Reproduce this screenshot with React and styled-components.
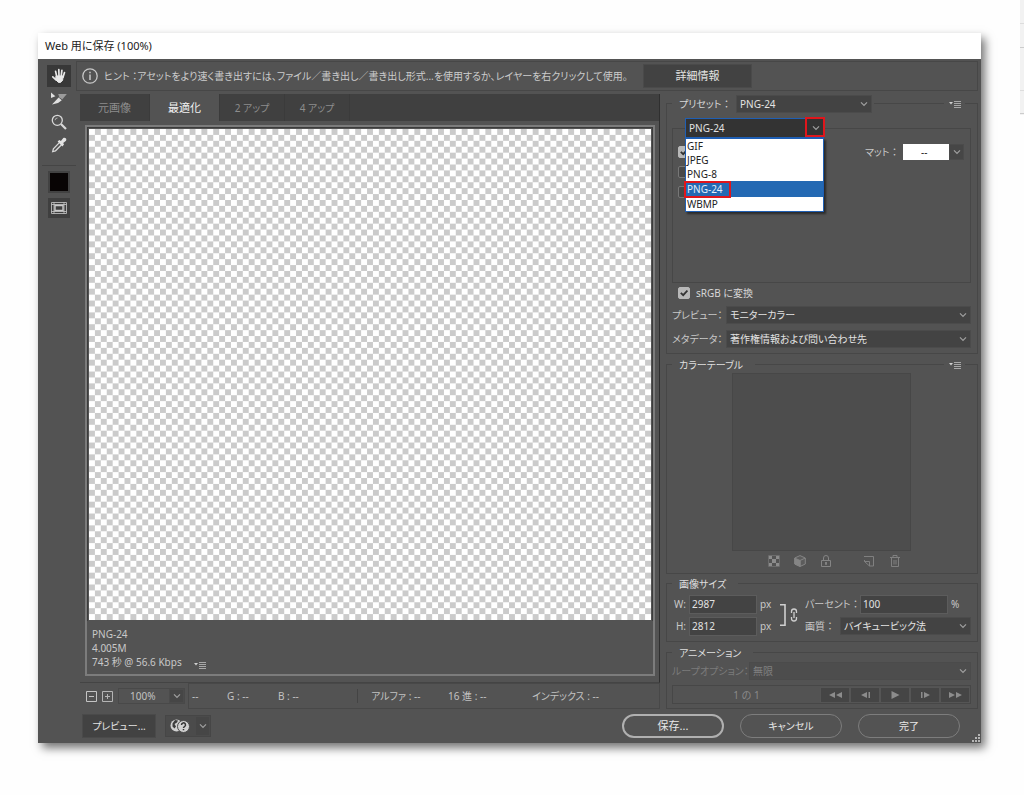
import React, { useId } from 'react';
import styled, { createGlobalStyle } from 'styled-components';

const GlobalStyle = createGlobalStyle`
  * {
    box-sizing: border-box;
  }

  body {
    margin: 0;
    background: #fefefe;
    font-family: 'Noto Sans', 'Noto Sans CJK JP', sans-serif;
    font-size: 10px;
    line-height: 14px;
    color: #d6d6d6;
    font-feature-settings: 'palt';
  }

  button, input, select {
    margin: 0;
    font: inherit;
    color: inherit;
    font-feature-settings: inherit;
  }
`;

const Page = styled.div`
  display: flex;
  position: relative;
  min-height: 100vh;
  padding: 33px 43px 52px 38px;
`;

const PageEdge = styled.div`
  position: absolute;
  top: 0;
  right: 0;
  width: 4px;
  height: 115px;
  background: linear-gradient(#ddd, #ddd) 0 23px / 100% 1px no-repeat,
    linear-gradient(#ccc, #ccc) 0 47px / 100% 1px no-repeat,
    linear-gradient(#ddd, #ddd) 0 90px / 100% 1px no-repeat,
    linear-gradient(#ccc, #ccc) 0 113px / 100% 1px no-repeat,
    #f2f2f2;
`;

const Dialog = styled.div`
  display: flex;
  position: relative;
  flex: 1;
  flex-direction: column;
  min-width: 0;
  background: #535353;
  box-shadow: 4px 5px 9px rgba(0, 0, 0, 0.55);
`;

const TitleBar = styled.h1`
  height: 26px;
  margin: 0;
  padding: 0 7px;
  background: #fff;
  color: #222;
  font-size: 11px;
  font-weight: 400;
  line-height: 25px;
`;

const Body = styled.div`
  display: flex;
  flex: 1;
`;

const Tools = styled.div`
  display: flex;
  flex-direction: column;
  align-items: center;
  width: 38px;
  padding: 6px 0 0 4px;
`;

const ToolButton = styled.button`
  display: flex;
  align-items: center;
  justify-content: center;
  width: 24px;
  height: 22px;
  margin-bottom: 1px;
  padding: 0;
  border: 0;
  background: ${({ $active }) => ($active ? '#383838' : 'transparent')};
`;

const ToolDivider = styled.hr`
  width: 100%;
  margin: 8px 0 5px;
  border: 0;
  border-top: 1px solid #454545;
`;

const Swatch = styled.button`
  width: 22px;
  height: 22px;
  margin-bottom: 5px;
  border: 2px solid #424242;
  background: #080404;
`;

const SliceButton = styled(ToolButton)`
  width: 22px;
  height: 20px;
  background: #3f3f3f;
`;

const Main = styled.div`
  display: flex;
  flex: 1;
  flex-direction: column;
  min-width: 0;
  padding: 2px 3px 0 0;
`;

const HintBar = styled.div`
  display: flex;
  align-items: center;
  height: 30px;
  padding: 0 5px;
  border: 1px solid #474747;

  svg {
    flex: none;
  }
`;

const HintText = styled.span`
  width: 539px;
  margin-left: 6px;
  color: #ccc;
  white-space: nowrap;
`;

const FlatButton = styled.button`
  width: ${({ $width }) => $width}px;
  height: 24px;
  padding: 0;
  border: 1px solid #4a4a4a;
  background: #424242;
  color: #e2e2e2;
  font-size: ${({ $size }) => $size || 11}px;
`;

const Columns = styled.div`
  display: flex;
  gap: 6px;
  height: 618px;
`;

const Left = styled.div`
  display: flex;
  flex: 1;
  flex-direction: column;
  min-width: 0;
  padding: 3px 0 0 4px;
`;

const Viewer = styled.div`
  display: flex;
  flex: 1;
  flex-direction: column;
  border-right: 1px solid #2f2f2f;
  border-bottom: 1px solid #444;
`;

const Tabs = styled.div`
  display: flex;
  height: 27px;
  background: #404040;
`;

const Tab = styled.button`
  width: ${({ $wide }) => ($wide ? 70 : 65)}px;
  padding: 0;
  border: 0;
  border-right: 1px solid #3b3b3b;
  background: ${({ $active }) => ($active ? '#535353' : 'transparent')};
  color: ${({ $active }) => ($active ? '#f2f2f2' : '#8d8d8d')};
  font-size: ${({ $wide }) => ($wide ? 11 : 10)}px;
`;

const Frame = styled.div`
  display: flex;
  flex: 1;
  flex-direction: column;
  margin: 4px 4px 6px 5px;
  border: 2px solid #7c7c7c;
`;

const Canvas = styled.div`
  display: flex;
  height: 494px;
  padding: 1px;
  border: 1px solid #3c3c3c;
  border-width: 1px 1px 0;

  svg {
    flex: 1;
    min-width: 0;
    height: 100%;
  }
`;

const FileInfo = styled.div`
  display: flex;
  align-items: flex-end;
  gap: 11px;
  padding: 6px 5px 5px;
  color: #c8c8c8;
`;

const StatusBar = styled.div`
  display: flex;
  align-items: center;
  height: 26px;
  color: #c2c2c2;
`;

const ZoomControls = styled.div`
  display: flex;
  align-items: center;
  gap: 5px;
  width: 108px;
  height: 26px;
  padding-left: 6px;
`;

const StepButton = styled.button`
  width: 11px;
  height: 11px;
  padding: 0;
  border: 0;
  background: transparent;
  line-height: 0;
`;

const ZoomSelect = styled.div`
  display: flex;
  width: 67px;
  height: 16px;
  border: 1px solid #494949;

  select {
    flex: 1;
    min-width: 0;
    padding: 0 0 0 11px;
    border: 0;
    background: transparent;
    appearance: none;
  }
`;

const Readouts = styled.div`
  display: grid;
  flex: 1;
  grid-template-columns: 35px 51px 79px 91px 84px 1fr;
  align-items: center;
  height: 26px;
  padding-left: 3px;
  border: 1px solid #484848;
  white-space: nowrap;
`;

const AlphaReadout = styled.span`
  padding-left: 13px;
  border-left: 1px solid #444;
`;

const SelectBox = styled.div`
  display: flex;
  position: relative;
  flex: ${({ $width }) => ($width ? 'none' : 1)};
  width: ${({ $width }) => ($width ? `${$width}px` : 'auto')};
  height: ${({ $height }) => $height || 18}px;
  border: 1px solid ${({ $open }) => ($open ? '#1f5fb4' : '#4b4b4b')};
  background: ${({ $open, $faded }) => ($open ? '#333' : $faded ? '#4d4d4d' : '#434343')};

  select {
    flex: 1;
    min-width: 0;
    padding: 0 16px 0 3px;
    border: 0;
    background: transparent;
    appearance: none;
    color: ${({ $faded }) => ($faded ? '#808080' : '#e2e2e2')};
    opacity: 1;
  }

  svg {
    position: absolute;
    top: calc(50% - 3px);
    right: 3px;
    pointer-events: none;
  }
`;

const Right = styled.div`
  display: flex;
  flex-direction: column;
  width: 312px;
`;

const Group = styled.section`
  height: ${({ $height }) => $height}px;
  margin-top: ${({ $gap }) => $gap || 10}px;
  padding: 0 6px 0 5px;
  border: 1px solid #474747;
`;

const GroupHead = styled.div`
  display: flex;
  align-items: center;
  justify-content: space-between;
  height: 17px;
  margin-top: -9px;
  padding: 0 6px 0 0;
`;

const GroupTitle = styled.h2`
  display: flex;
  align-items: center;
  margin: 0;
  padding: 0 12px 0 7px;
  background: #535353;
  color: #dedede;
  font-size: 10px;
  font-weight: 400;
`;

const PresetLabel = styled.label`
  display: flex;
  align-items: center;
  padding: 0 2px 0 7px;
  background: #535353;

  span {
    width: 57px;
  }
`;

const MenuButton = styled.button`
  display: flex;
  padding: 2px 4px;
  border: 0;
  background: #535353;
`;

const Options = styled.div`
  height: 155px;
  margin-top: 16px;
  padding: 0 6px 0 5px;
  border: 1px solid #474747;
`;

const FormatPicker = styled.div`
  position: relative;
  z-index: 2;
  width: 140px;
  height: 20px;
  margin: -11px 0 4px 7px;
`;

const FormatList = styled.ul`
  position: absolute;
  top: 20px;
  left: 0;
  width: 139px;
  margin: 0;
  padding: 0;
  border: 1px solid #1f5fb4;
  background: #fff;
  box-shadow: 2px 2px 2px rgba(0, 0, 0, 0.5);
  list-style: none;
`;

const FormatItem = styled.li`
  padding: ${({ $selected }) => ($selected ? '1px' : '0 1px')};
  background: ${({ $selected }) => ($selected ? '#2469b3' : 'transparent')};
  color: ${({ $selected }) => ($selected ? '#e6eefa' : '#222')};
`;

// red frames that point out where to click
const Marker = styled.span`
  position: absolute;
  z-index: 3;
  top: ${({ $top }) => $top}px;
  left: ${({ $left }) => $left}px;
  width: ${({ $width }) => $width}px;
  height: ${({ $height }) => $height}px;
  border: 2px solid #e0161c;
  pointer-events: none;
`;

const OptionRow = styled.div`
  display: flex;
  align-items: center;
  justify-content: space-between;
  height: 20px;
`;

const Check = styled.input`
  width: 12px;
  height: 12px;
  border: 1px solid ${({ defaultChecked }) => (defaultChecked ? '#b8b8b8' : '#777')};
  border-radius: 2px;
  appearance: none;
  background: ${({ defaultChecked }) => (defaultChecked ? '#b8b8b8' : '#484848')};
`;

const CheckWrap = styled.span`
  display: flex;
  position: relative;

  svg {
    position: absolute;
    top: 2px;
    left: 2px;
    pointer-events: none;
  }
`;

const Matte = styled.div`
  display: flex;
  align-items: center;
  color: #c8c8c8;

  label {
    width: 38px;
    white-space: nowrap;
  }

  select {
    width: 46px;
    height: 16px;
    padding: 0 18px;
    border: 0;
    border-radius: 0;
    appearance: none;
    background: #fff;
    color: #222;
  }
`;

const ArrowBox = styled.span`
  display: flex;
  align-items: center;
  justify-content: center;
  width: 15px;
  height: ${({ $height }) => $height || 16}px;
  border: 1px solid #4b4b4b;
  background: #464646;
`;

const SrgbLabel = styled.label`
  display: flex;
  align-items: center;
  gap: 6px;
  height: 20px;
  padding-left: 6px;
`;

const FieldRow = styled.div`
  display: flex;
  align-items: center;
  height: ${({ $height }) => $height || 24}px;
  color: ${({ $faded }) => ($faded ? '#7b7b7b' : '#c8c8c8')};
`;

const FieldLabel = styled.label`
  flex: none;
  width: ${({ $width }) => $width}px;
  text-align: ${({ $end }) => ($end ? 'right' : 'left')};
  white-space: nowrap;
`;

const ColorTable = styled.div`
  width: 179px;
  height: 178px;
  margin: 0 auto 0 60px;
  border: 1px solid #474747;
  background: #4d4d4d;
`;

const TableTools = styled.div`
  display: flex;
  gap: 14px;
  padding: 4px 0 0 96px;

  button:nth-child(4) {
    margin-left: 17px;
  }
`;

const IconButton = styled.button`
  width: 12px;
  height: 12px;
  padding: 0;
  border: 0;
  background: transparent;
  line-height: 0;
`;

const SizeGrid = styled.div`
  display: flex;
  align-items: center;
  height: 46px;
`;

const SizeColumn = styled.div`
  display: flex;
  flex: ${({ $width }) => ($width ? 'none' : 1)};
  flex-direction: column;
  gap: 3px;
  width: ${({ $width }) => ($width ? `${$width}px` : 'auto')};
  min-width: 0;
`;

const SizeRow = styled.div`
  display: flex;
  align-items: center;
  gap: 3px;
  height: 19px;
  color: #c8c8c8;
`;

const NumberInput = styled.input`
  width: ${({ $width }) => $width}px;
  height: 19px;
  padding: 0 2px;
  border: 1px solid #5c5c5c;
  background: #434343;
  color: #e2e2e2;
`;

const LinkMark = styled.svg`
  margin: 0 6px 0 7px;
`;

const Player = styled.div`
  display: flex;
  align-items: center;
  height: 19px;
  margin-top: 4px;
  border: 1px solid #474747;
  color: #8a8a8a;
`;

const FrameCount = styled.span`
  flex: 1;
  text-align: center;
`;

const PlayerButton = styled.button`
  width: 30px;
  height: 16px;
  padding: 0;
  border: 1px solid #555;
  background: #454545;
  line-height: 0;
`;

const Footer = styled.footer`
  display: flex;
  align-items: center;
  gap: 16px;
  height: 33px;
  padding: 0 18px 0 6px;
`;

const BrowserPicker = styled.button`
  display: flex;
  align-items: center;
  justify-content: flex-end;
  gap: 5px;
  width: 46px;
  height: 22px;
  margin: 0 auto 0 -7px;
  padding: 0;
  border: 1px solid #464646;
  background: #4b4b4b;
`;

const PillButton = styled.button`
  width: 102px;
  height: 24px;
  padding: 0;
  border: ${({ $primary }) => ($primary ? '2px solid #b0b0b0' : '1px solid #7d7d7d')};
  border-radius: 12px;
  background: transparent;
  color: #e8e8e8;
  font-size: ${({ $size }) => $size || 11}px;
`;

const Grip = styled.svg`
  position: absolute;
  right: 0;
  bottom: 0;
`;

function Chevron() {
  return (
    <svg width="8" height="6" viewBox="0 0 8 6" fill="none" stroke="#a0a0a0" strokeWidth="1.2">
      <path d="M1 1.3 4 4.3 7 1.3" />
    </svg>
  );
}

function MenuIcon() {
  return (
    <svg width="13" height="8" viewBox="0 0 13 8">
      <path fill="#d0d0d0" d="M1 2h4L3 4.5z" />
      <path fill="#a8a8a8" d="M6 1h7v1H6zM6 3h7v1H6zM6 5h7v1H6zM6 7h7v1H6z" />
    </svg>
  );
}

function Checkerboard() {
  return (
    <svg viewBox="0 0 95 83" preserveAspectRatio="none" shapeRendering="crispEdges">
      <defs>
        <pattern id="checks" width="2" height="2" patternUnits="userSpaceOnUse">
          <path fill="#fff" d="M0 0h2v2H0z" />
          <path fill="#cbcbcb" d="M1 0h1v1H1zM0 1h1v1H0z" />
        </pattern>
      </defs>
      <rect width="95" height="83" fill="url(#checks)" />
    </svg>
  );
}

function Select({ options, id, disabled, label, ...box }) {
  return (
    <SelectBox {...box}>
      <select id={id} disabled={disabled} aria-label={label}>
        {options.map((option) => (
          <option key={option}>{option}</option>
        ))}
      </select>
      <Chevron />
    </SelectBox>
  );
}

function Checkbox({ checked, label }) {
  return (
    <CheckWrap>
      <Check type="checkbox" defaultChecked={checked} aria-label={label} />
      {checked && (
        <svg width="8" height="8" viewBox="0 0 8 8" fill="none" stroke="#333" strokeWidth="1.8">
          <path d="M.8 3.8 3.2 6.2 7.4 1.5" />
        </svg>
      )}
    </CheckWrap>
  );
}

function ToolBox() {
  return (
    <Tools>
      <ToolButton $active aria-label="手のひらツール">
        <svg width="16" height="16" viewBox="0 0 16 16" fill="none" stroke="#e8e8e8" strokeLinecap="round">
          <path strokeWidth="1.7" d="M5.8 9 4.6 3.4M8 8 7.8 1.6M10.2 8l.7-5.6M12 9.2l1.5-4.6M5 11.8 1.8 8.8" />
          <path fill="#e8e8e8" d="M5.4 8h6.8l-.6 4.2-2 2.2H7.4L4.8 11.8z" />
        </svg>
      </ToolButton>
      <ToolButton aria-label="スライス選択ツール">
        <svg width="18" height="16" viewBox="0 0 18 16">
          <path fill="#e0e0e0" d="M1 1.5 5.4 5.2 1 7zM2 13.4 8.6 6.6l3.2 2.6L8 12z" />
          <path fill="#9b9b9b" d="M8.2 3h8.6l-4.5 5.6-3-2.4z" />
        </svg>
      </ToolButton>
      <ToolButton aria-label="ズームツール">
        <svg width="16" height="16" viewBox="0 0 16 16" fill="none" stroke="#d8d8d8">
          <circle cx="6.3" cy="6.3" r="5" strokeWidth="1.3" />
          <path d="M4 6.2A2.5 2.5 0 0 1 6.5 4" strokeWidth=".7" />
          <path d="m10 10 5 5" strokeWidth="2.2" />
        </svg>
      </ToolButton>
      <ToolButton aria-label="スポイトツール">
        <svg width="16" height="16" viewBox="0 0 16 16">
          <path fill="none" stroke="#d8d8d8" strokeWidth="1.3" d="m8.4 5.6-6 6.2-.7 2.8 2.8-.8 6-6" />
          <path fill="#e4e4e4" d="m6.6 4.5 1.7-1.5 1.6.9L12.3 1c1.8-1 3.8.7 2.7 2.7L12.2 6l.8 1.6-1.6 1.8z" />
        </svg>
      </ToolButton>
      <ToolDivider />
      <Swatch aria-label="スポイトカラー" />
      <SliceButton aria-label="スライスの表示を切り替え">
        <svg width="16" height="12" viewBox="0 0 16 12" fill="none" stroke="#c9c9c9">
          <path d="M.5.5h15v11H.5zM3 .5v11M13 .5v11M.5 2.5h15M.5 9.5h15" strokeWidth=".8" />
          <path d="M4 3.5h8v5H4z" strokeWidth="1.4" />
        </svg>
      </SliceButton>
    </Tools>
  );
}

function PreviewPane() {
  return (
    <Viewer>
      <Tabs role="tablist">
        <Tab role="tab" $wide>元画像</Tab>
        <Tab role="tab" $wide $active aria-selected="true">最適化</Tab>
        <Tab role="tab">2 アップ</Tab>
        <Tab role="tab">4 アップ</Tab>
      </Tabs>
      <Frame>
        <Canvas>
          <Checkerboard />
        </Canvas>
        <FileInfo>
          <div>
            PNG-24
            <br />
            4.005M
            <br />
            743 秒 @ 56.6 Kbps
          </div>
          <MenuIcon />
        </FileInfo>
      </Frame>
    </Viewer>
  );
}

function Status() {
  return (
    <StatusBar>
      <ZoomControls>
        <StepButton aria-label="ズームアウト">
          <svg width="11" height="11" viewBox="0 0 11 11" fill="none" stroke="#c4c4c4">
            <path d="M.5.5h10v10H.5zM3 5.5h5" />
          </svg>
        </StepButton>
        <StepButton aria-label="ズームイン">
          <svg width="11" height="11" viewBox="0 0 11 11" fill="none" stroke="#b4b4b4">
            <path d="M.5.5h10v10H.5zM3 5.5h5M5.5 3v5" />
          </svg>
        </StepButton>
        <ZoomSelect>
          <select aria-label="ズームレベル">
            <option>100%</option>
          </select>
          <ArrowBox $height={14}><Chevron /></ArrowBox>
        </ZoomSelect>
      </ZoomControls>
      <Readouts>
        <span>--</span>
        <span>G : --</span>
        <span>B : --</span>
        <AlphaReadout>アルファ : --</AlphaReadout>
        <span>16 進 : --</span>
        <span>インデックス : --</span>
      </Readouts>
    </StatusBar>
  );
}

const FORMATS = ['GIF', 'JPEG', 'PNG-8', 'PNG-24', 'WBMP'];

function PresetGroup() {
  const id = useId();
  return (
    <Group $height={251} $gap={12}>
      <GroupHead>
        <PresetLabel>
          <span>プリセット ：</span>
          <Select $width={136} options={['PNG-24']} />
        </PresetLabel>
        <MenuButton aria-label="最適化メニュー"><MenuIcon /></MenuButton>
      </GroupHead>
      <Options>
        <FormatPicker>
          <SelectBox $open $width={139} $height={20}>
            <select aria-label="ファイル形式" defaultValue="PNG-24">
              {FORMATS.map((format) => (
                <option key={format}>{format}</option>
              ))}
            </select>
            <Chevron />
          </SelectBox>
          <Marker $top={-1} $left={120} $width={20} $height={20} />
          <FormatList>
            {FORMATS.map((format) => (
              <FormatItem key={format} $selected={format === 'PNG-24'}>{format}</FormatItem>
            ))}
          </FormatList>
          <Marker $top={63} $left={-1} $width={47} $height={17} />
        </FormatPicker>
        <OptionRow>
          <Checkbox checked label="透明部分" />
          <Matte>
            <label htmlFor={`${id}matte`}>マット ：</label>
            <select id={`${id}matte`}>
              <option>--</option>
            </select>
            <ArrowBox><Chevron /></ArrowBox>
          </Matte>
        </OptionRow>
        <OptionRow><Checkbox label="インターレース" /></OptionRow>
        <OptionRow><Checkbox label="カラープロファイルの埋め込み" /></OptionRow>
      </Options>
      <SrgbLabel>
        <Checkbox checked />
        sRGB に変換
      </SrgbLabel>
      <FieldRow>
        <FieldLabel $width={54} htmlFor={`${id}preview`}>プレビュー：</FieldLabel>
        <Select id={`${id}preview`} options={['モニターカラー']} />
      </FieldRow>
      <FieldRow>
        <FieldLabel $width={54} htmlFor={`${id}meta`}>メタデータ：</FieldLabel>
        <Select id={`${id}meta`} options={['著作権情報および問い合わせ先']} />
      </FieldRow>
    </Group>
  );
}

function ColorTableGroup() {
  return (
    <Group $height={210}>
      <GroupHead>
        <GroupTitle>カラーテーブル</GroupTitle>
        <MenuButton aria-label="カラーテーブルメニュー"><MenuIcon /></MenuButton>
      </GroupHead>
      <ColorTable />
      <TableTools>
        <IconButton aria-label="透明にマップ">
          <svg width="12" height="12" viewBox="0 0 12 12">
            <path fill="none" stroke="#6c6c6c" d="M.5.5h11v11H.5z" />
            <path fill="#8c8c8c" d="M1 1h3v3H1zM8 1h3v3H8zM4 4h4v4H4zM1 8h3v3H1zM8 8h3v3H8z" />
          </svg>
        </IconButton>
        <IconButton aria-label="Web パレットにシフト">
          <svg width="12" height="12" viewBox="0 0 12 12" stroke="#858585">
            <path fill="#5c5c5c" d="M6 .6 11.3 3v6L6 11.5.7 9V3z" />
            <path fill="#858585" d="M6 5.5 1 3.2V9l5 2.3z" />
            <path fill="none" d="m6 5.5 5-2.3M6 5.5v6" />
          </svg>
        </IconButton>
        <IconButton aria-label="カラーをロック">
          <svg width="12" height="12" viewBox="0 0 12 12" fill="none" stroke="#858585">
            <path d="M1.5 5.5h9v6h-9zM3.5 5.5V3a2.5 2.5 0 0 1 5 0v2.5" />
            <path strokeWidth="1.5" d="M6 7v3M5 8h2" />
          </svg>
        </IconButton>
        <IconButton aria-label="新規カラー">
          <svg width="12" height="12" viewBox="0 0 12 12" fill="none" stroke="#808080">
            <path d="M1 1.5h9.5v9.5H6.5L1.5 6.500V5M1.5 6.500h5V11" />
          </svg>
        </IconButton>
        <IconButton aria-label="カラーを削除">
          <svg width="12" height="12" viewBox="0 0 12 12" fill="none" stroke="#808080">
            <path d="M1 2.5h10M4 2V.5h4V2M2.5 2.5v9h7v-9M5 5v4.500M7 5v4.500" />
          </svg>
        </IconButton>
      </TableTools>
    </Group>
  );
}

function ImageSizeGroup() {
  const id = useId();
  return (
    <Group $height={59} $gap={9}>
      <GroupHead>
        <GroupTitle>画像サイズ</GroupTitle>
      </GroupHead>
      <SizeGrid>
        <SizeColumn $width={100}>
          <SizeRow>
            <FieldLabel $width={14} $end htmlFor={`${id}w`}>W:</FieldLabel>
            <NumberInput id={`${id}w`} $width={68} defaultValue="2987" />
            px
          </SizeRow>
          <SizeRow>
            <FieldLabel $width={14} $end htmlFor={`${id}h`}>H:</FieldLabel>
            <NumberInput id={`${id}h`} $width={68} defaultValue="2812" />
            px
          </SizeRow>
        </SizeColumn>
        <LinkMark width="20" height="24" viewBox="0 0 20 24" fill="none" stroke="#cfcfcf">
          <path strokeWidth="1.6" d="M1 1.8h5v20.400H1" />
          <path strokeWidth="1.3" d="M12.5 10V8.500a2.5 2.5 0 0 1 5 0V10M12.5 14v1.500a2.5 2.5 0 0 0 5 0V14M15 9v6" />
        </LinkMark>
        <SizeColumn>
          <SizeRow>
            <FieldLabel $width={52} htmlFor={`${id}percent`}>パーセント ：</FieldLabel>
            <NumberInput id={`${id}percent`} $width={88} defaultValue="100" />
            %
          </SizeRow>
          <SizeRow>
            <FieldLabel $width={32} htmlFor={`${id}quality`}>画質 ：</FieldLabel>
            <Select id={`${id}quality`} options={['バイキュービック法']} />
          </SizeRow>
        </SizeColumn>
      </SizeGrid>
    </Group>
  );
}

const PLAYER_BUTTONS = [
  { label: '最初のフレーム', path: 'M7 2v6L1 5zM14 2v6L8 5z' },
  { label: '前のフレーム', path: 'M9 2v6L3 5zM10.5 2H12v6h-1.5z' },
  { label: '再生', path: 'M3.5 1v8l8-4z' },
  { label: '次のフレーム', path: 'M3 2h1.5v6H3zM6 2v6l6-3z' },
  { label: '最後のフレーム', path: 'M1 2v6l6-3zM8 2v6l6-3z' },
];

function AnimationGroup() {
  const id = useId();
  return (
    <Group $height={57}>
      <GroupHead>
        <GroupTitle>アニメーション</GroupTitle>
      </GroupHead>
      <FieldRow $faded $height={20}>
        <FieldLabel $width={77} htmlFor={`${id}loop`}>ループオプション：</FieldLabel>
        <Select id={`${id}loop`} disabled $faded options={['無限']} />
      </FieldRow>
      <Player>
        <FrameCount>1 の 1</FrameCount>
        {PLAYER_BUTTONS.map(({ label, path }) => (
          <PlayerButton key={label} aria-label={label}>
            <svg width="15" height="10" viewBox="0 0 15 10" fill="#8c8c8c">
              <path d={path} />
            </svg>
          </PlayerButton>
        ))}
      </Player>
    </Group>
  );
}

function FooterBar() {
  return (
    <Footer>
      <FlatButton $width={74} $size={10}>プレビュー...</FlatButton>
      <BrowserPicker aria-label="ブラウザーを選択">
        <svg width="20" height="14" viewBox="0 0 20 14">
          <circle cx="6.5" cy="6.5" r="6" fill="#d0d0d0" />
          <path fill="#3d3d3d" d="m5 1 3 .5-1 2L4.500 5 6 7.500 4.500 9.500 2.500 7.500 2.500 4.500z" />
          <circle cx="13.5" cy="7.5" r="6" fill="#d0d0d0" stroke="#4b4b4b" />
          <path
            fill="none"
            stroke="#333"
            strokeWidth="1.5"
            d="M11.5 6a2 2 0 1 1 3 1.600c-.7.4-1 .6-1 1.400M13.5 10v1.300"
          />
        </svg>
        <ArrowBox $height={20}><Chevron /></ArrowBox>
      </BrowserPicker>
      <PillButton $primary>保存...</PillButton>
      <PillButton $size={10}>キャンセル</PillButton>
      <PillButton $size={10}>完了</PillButton>
    </Footer>
  );
}

export default function App() {
  return (
    <>
      <GlobalStyle />
      <Page>
        <PageEdge />
        <Dialog>
          <TitleBar>Web 用に保存 (100%)</TitleBar>
          <Body>
            <ToolBox />
            <Main>
              <HintBar>
                <svg width="16" height="16" viewBox="0 0 16 16" fill="none" stroke="#c8c8c8">
                  <circle cx="8" cy="8" r="7.2" strokeWidth="1.3" />
                  <path strokeWidth="1.5" d="M8 6.5V12M8 3.8v1.5" />
                </svg>
                <HintText>
                  ヒント ：アセットをより速く書き出すには、ファイル／書き出し／書き出し形式...を使用するか、レイヤーを右クリックして使用。
                </HintText>
                <FlatButton $width={109}>詳細情報</FlatButton>
              </HintBar>
              <Columns>
                <Left>
                  <PreviewPane />
                  <Status />
                </Left>
                <Right>
                  <PresetGroup />
                  <ColorTableGroup />
                  <ImageSizeGroup />
                  <AnimationGroup />
                </Right>
              </Columns>
              <FooterBar />
            </Main>
          </Body>
          <Grip width="9" height="9" viewBox="0 0 9 9" fill="#b5b5b5">
            <path d="M6 0h2v2H6zM3 3h2v2H3zM6 3h2v2H6zM0 6h2v2H0zM3 6h2v2H3zM6 6h2v2H6z" />
          </Grip>
        </Dialog>
      </Page>
    </>
  );
}
